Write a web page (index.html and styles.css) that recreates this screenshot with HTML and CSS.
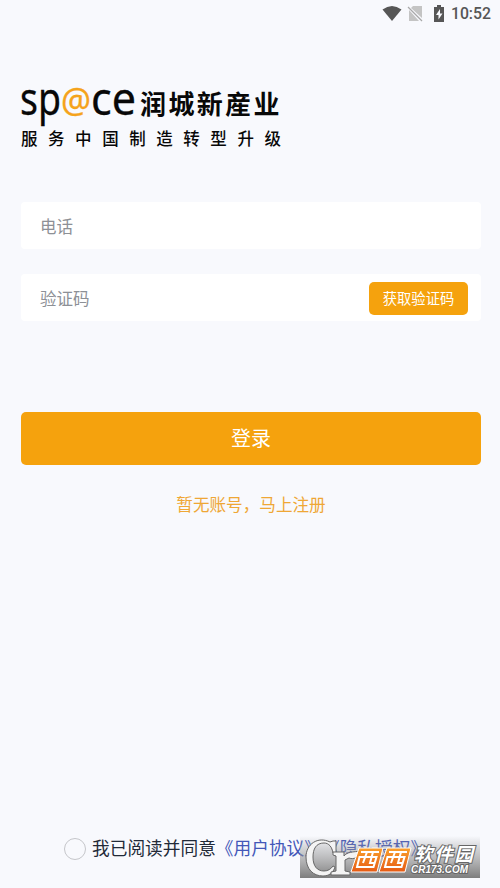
FILE: index.html
```html
<!DOCTYPE html>
<html lang="zh-CN">
<head>
<meta charset="utf-8">
<title>登录</title>
<link rel="stylesheet" href="styles.css">
</head>
<body>
<main class="screen">
  <header class="status">
    <svg class="status-icons" width="64" height="20" viewBox="0 0 64 20">
      <path fill="#565656" d="M1.500 6.500Q11 -.5 20.500 6.500L11 18Z"/>
      <path fill="#c4c4c4" d="M32 3h9v12L30 5ZM28 7l10 11H28Z"/>
      <path stroke="#a8a8a8" stroke-width="1.300" d="M27 4l14 14"/>
      <path fill="#565656" d="M53 4h3V2h4v2h3v15H53Z"/>
      <path fill="#f8f9fd" d="M59 6l-4 6h2.500v4.500l4-6h-2.500Z"/>
    </svg>
    <span class="clock">10:52</span>
  </header>
  <svg class="logo" width="264" height="64" viewBox="0 0 264 64">
    <g class="latin">
      <text x="-1" y="29" textLength="41" lengthAdjust="spacingAndGlyphs">sp</text>
      <text class="at" x="40" y="26.500" textLength="30" lengthAdjust="spacingAndGlyphs">@</text>
      <text x="70" y="29" textLength="45" lengthAdjust="spacingAndGlyphs">ce</text>
    </g>
    <text class="company" x="119" y="27.500">润城新産业</text>
    <text class="slogan" x="0" y="59">服务中国制造转型升级</text>
  </svg>
  <form class="form">
    <div class="field phone">电话</div>
    <div class="field verify">验证码<button class="code" type="button">获取验证码</button></div>
    <button class="login" type="button">登录</button>
    <a class="register">暂无账号，马上注册</a>
  </form>
  <footer class="agreement">
    <span class="radio"></span>
    <span>我已阅读并同意<a class="link">《用户协议》《隐私授权》</a></span>
  </footer>
  <svg class="watermark" width="180" height="42" viewBox="0 0 180 42">
    <defs>
      <linearGradient id="shade" x1="0" y1="0" x2="0" y2="1">
        <stop offset="0" stop-color="#999" stop-opacity="0"/>
        <stop offset=".3" stop-color="#999" stop-opacity=".4"/>
        <stop offset="1" stop-color="#7d7d7d"/>
      </linearGradient>
      <linearGradient id="orange" x1="0" y1="0" x2="0" y2="1">
        <stop offset="0" stop-color="#f9a02c"/>
        <stop offset="1" stop-color="#e65a14"/>
      </linearGradient>
    </defs>
    <path fill="url(#shade)" d="M0 0h180v42H0Z"/>
    <path class="mark" d="M33 5h3v12h-3C32 11 29 7 24 7 16 7 13 13 13 21c0 9 4 14 11 14 4 0 7-2 9-5l2 1c-2 6-6 9-12 9C13 40 6 33 6 21 6 8 18 0 30 6Z"/>
    <path class="mark" d="M33 16h11v4c3-4 8-4 18-5-3 6-8 9-13 7l-4 2v11l5 1v3H31v-3l5-1V20l-3-1Z"/>
    <path fill="url(#orange)" stroke="#fff" d="M59 12h24l-6 24H51Z"/>
    <path fill="url(#orange)" stroke="#fff" d="M87 12h24l-6 24H79Z"/>
    <path class="west" d="M61 16h18M59.500 21h17l-3 10H57ZM67 16l-4 11M73 16l-3 11h4M89 16h18M87.500 21h17l-3 10H85ZM95 16l-4 11M101 16l-3 11h4"/>
    <text class="site-name" x="114" y="24.500" textLength="59">软件园</text>
    <text class="site-url" x="111" y="37" textLength="57" lengthAdjust="spacingAndGlyphs">CR173.COM</text>
  </svg>
</main>
</body>
</html>
```
FILE: styles.css
```css
* { box-sizing: border-box; }
body {
  margin: 0;
  background: #f8f9fd;
  font-family: "Noto Sans CJK SC", sans-serif;
}
.screen {
  position: relative;
  display: flex;
  flex-direction: column;
  height: 888px;
  padding: 0 19px 0 21px;
  overflow: hidden;
}
.status {
  display: flex;
  justify-content: flex-end;
  align-items: center;
  gap: 6px;
  height: 28px;
  margin-right: -10px;
}
.status-icons { margin-top: -3px; }
.clock {
  color: #565656;
  font: 500 15.800px/28px Roboto, sans-serif;
}
.logo {
  display: block;
  margin-top: 58px;
  overflow: visible;
}
.latin { font: 45px "Noto Sans", sans-serif; fill: #080808; stroke: #080808; stroke-width: .3px; }
.at { font-size: 34px; fill: #f5a31b; stroke: #f5a31b; }
.company { font-size: 26px; font-weight: 700; letter-spacing: 2.400px; fill: #080808; }
.slogan { font-size: 16.500px; font-weight: 500; letter-spacing: 10.550px; fill: #080808; }
.form {
  display: flex;
  flex-direction: column;
  margin-top: 52px;
}
.field {
  display: flex;
  justify-content: space-between;
  align-items: center;
  height: 47px;
  margin-bottom: 25px;
  padding: 0 13px 0 19px;
  border-radius: 4px;
  background: #fff;
  color: #8d9096;
  font-size: 16.500px;
}
.verify { padding-top: 1px; }
button {
  padding: 0;
  border: 0;
  background: #f5a20d;
  color: #fff;
  font-family: inherit;
}
.code {
  width: 99px;
  height: 33px;
  padding-bottom: 2px;
  border-radius: 5px;
  font-size: 14.300px;
}
.login {
  height: 53px;
  margin-top: 66px;
  padding-bottom: 2px;
  border-radius: 5px;
  font-size: 20px;
}
.register {
  margin-top: 27px;
  color: #efa735;
  font-size: 16.600px;
  line-height: 24px;
  text-align: center;
}
.agreement {
  display: flex;
  align-items: center;
  gap: 6px;
  margin: auto 0 27px 43px;
  color: #222a38;
  font-size: 17.700px;
  line-height: 27px;
  white-space: nowrap;
  text-spacing-trim: space-all;
}
.radio {
  width: 22px;
  height: 22px;
  margin-top: 2px;
  border: 1px solid #c5c6ca;
  border-radius: 50%;
}
.link { color: #4357b8; }
.watermark {
  position: absolute;
  left: 300px;
  top: 836px;
}
.mark { fill: #f4f4f4; stroke: #686868; }
.west { fill: none; stroke: #fff; stroke-width: 2px; }
.site-name, .site-url { fill: #fff; stroke: #666; stroke-width: 2px; paint-order: stroke; font-style: italic; font-weight: 700; }
.site-name { font-size: 18.500px; }
.site-url { font-family: "Liberation Sans", sans-serif; font-size: 10px; }
```
